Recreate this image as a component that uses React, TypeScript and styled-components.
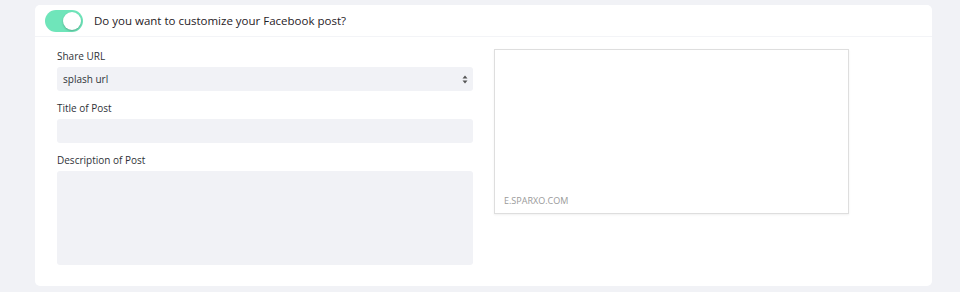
import styled, { createGlobalStyle } from 'styled-components';

// ─── Global ───────────────────────────────────────────────────────────────────
const GlobalStyle = createGlobalStyle`
  html, body {
    margin: 0;
    padding: 0;
    background: #f1f2f6;
    font-family: "Open Sans", "Liberation Sans", sans-serif;
  }
  * { box-sizing: border-box; }
`;

// ─── Styles ───────────────────────────────────────────────────────────────────
const Page = styled.div`
  padding: 5px 28px 0 35px;
  height: 292px;
  overflow: hidden;
`;

const Card = styled.section`
  background: #fff;
  border-radius: 5px;
  height: 281px;
`;

const Header = styled.header`
  display: flex;
  align-items: center;
  gap: 11px;
  height: 32px;
  padding: 0 10px;
  border-bottom: 1px solid #f3f4f7;
`;

const Toggle = styled.span<{ $on: boolean }>`
  position: relative;
  display: inline-block;
  width: 38px;
  height: 22px;
  border-radius: 11px;
  background: ${(p) => (p.$on ? '#6fe5ba' : '#d6d9e0')};
`;

const Knob = styled.span<{ $on: boolean }>`
  position: absolute;
  top: 2px;
  left: ${(p) => (p.$on ? '18px' : '2px')};
  width: 18px;
  height: 18px;
  border-radius: 50%;
  background: #fff;
  box-shadow: 0 1px 2px rgba(0, 0, 0, 0.25);
`;

const Question = styled.span`
  font-size: 11.5px;
  color: #1f2126;
`;

const Body = styled.div`
  display: flex;
  gap: 21px;
  padding: 11px 0 0 22px;
`;

const Form = styled.div`
  display: flex;
  flex-direction: column;
  width: 416px;
`;

const Label = styled.label`
  display: block;
  font-size: 10px;
  line-height: 16px;
  color: #2f3238;
  margin-bottom: 3px;
`;

const Field = styled.div`
  margin-bottom: 9px;
`;

const SelectBox = styled.div`
  display: flex;
  align-items: center;
  justify-content: space-between;
  height: 24px;
  padding: 0 5px 0 6px;
  background: #f1f2f6;
  border-radius: 3px;
  font-size: 10px;
  color: #2f3238;
`;

const Input = styled.div<{ $h: number }>`
  height: ${(p) => p.$h}px;
  background: #f1f2f6;
  border-radius: 3px;
`;

const Preview = styled.div`
  margin-top: 1px;
  width: 355px;
  height: 165px;
  border: 1px solid #dedede;
  box-shadow: 0 1px 2px rgba(0, 0, 0, 0.06);
  display: flex;
  align-items: flex-end;
  padding: 0 9px 6px;
`;

const Domain = styled.span`
  font-size: 9px;
  color: #9a9a9a;
  text-transform: uppercase;
`;

// ─── Component ────────────────────────────────────────────────────────────────
function Arrows() {
  return (
    <svg width="6" height="9" viewBox="0 0 6 9" aria-hidden="true">
      <path d="M3 0.5 L5.5 3.5 H0.5 Z" fill="#555" />
      <path d="M3 8.5 L5.5 5.5 H0.5 Z" fill="#555" />
    </svg>
  );
}

export default function App() {
  return (
    <>
      <GlobalStyle />
      <Page>
        <Card>
          <Header>
            <Toggle $on>
              <Knob $on />
            </Toggle>
            <Question>Do you want to customize your Facebook post?</Question>
          </Header>
          <Body>
            <Form>
              <Field>
                <Label>Share URL</Label>
                <SelectBox>
                  <span>splash url</span>
                  <Arrows />
                </SelectBox>
              </Field>
              <Field>
                <Label>Title of Post</Label>
                <Input $h={24} />
              </Field>
              <Field>
                <Label>Description of Post</Label>
                <Input $h={94} />
              </Field>
            </Form>
            <Preview>
              <Domain>e.sparxo.com</Domain>
            </Preview>
          </Body>
        </Card>
      </Page>
    </>
  );
}
